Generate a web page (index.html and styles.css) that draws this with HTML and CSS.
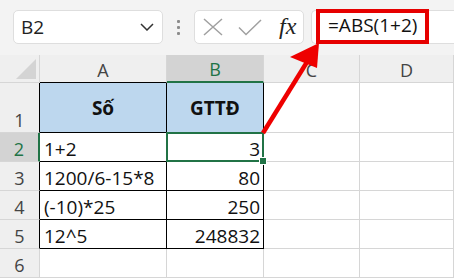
FILE: index.html
```html
<!DOCTYPE html>
<html>
<head>
<meta charset="utf-8">
<link rel="stylesheet" href="styles.css">
</head>
<body>
<div class="page">
  <div class="toolbar">
    <div class="namebox">
      <span class="ref">B2</span>
      <svg class="chev" width="14" height="8" viewBox="0 0 14 8"><path d="M1 1 L7 7 L13 1" fill="none" stroke="#333" stroke-width="1.5"/></svg>
    </div>
    <div class="dots"><i></i><i></i><i></i></div>
    <div class="btns">
      <svg width="20" height="18" viewBox="0 0 20 18"><path d="M1 1 L19 17 M19 1 L1 17" fill="none" stroke="#a0a0a0" stroke-width="1.5"/></svg>
      <svg width="24" height="17" viewBox="0 0 24 17"><path d="M1 8.5 L8 15.5 L23 1" fill="none" stroke="#a0a0a0" stroke-width="1.5"/></svg>
      <span class="fx">fx</span>
    </div>
    <div class="formula"><span class="hl">=ABS(1+2)</span></div>
  </div>
  <div class="sheet">
    <div class="corner"></div>
    <div class="ch">A</div>
    <div class="ch sel">B</div>
    <div class="ch">C</div>
    <div class="ch">D</div>

    <div class="rh tb">1</div>
    <div class="c a head">Số</div>
    <div class="c b head">GTTĐ</div>
    <div class="c"></div>
    <div class="c"></div>

    <div class="rh tb sel">2</div>
    <div class="c a">1+2</div>
    <div class="c b active">3</div>
    <div class="c"></div>
    <div class="c"></div>

    <div class="rh tb">3</div>
    <div class="c a">1200/6-15*8</div>
    <div class="c b">80</div>
    <div class="c"></div>
    <div class="c"></div>

    <div class="rh tb">4</div>
    <div class="c a">(-10)*25</div>
    <div class="c b">250</div>
    <div class="c"></div>
    <div class="c"></div>

    <div class="rh tb">5</div>
    <div class="c a">12^5</div>
    <div class="c b">248832</div>
    <div class="c"></div>
    <div class="c"></div>

    <div class="rh">6</div>
    <div class="c"></div>
    <div class="c"></div>
    <div class="c"></div>
    <div class="c"></div>
  </div>
  <svg class="arrow" width="454" height="278" viewBox="0 0 454 278">
    <line x1="263" y1="133" x2="307" y2="62" stroke="#ee0000" stroke-width="4.5"/>
    <polygon points="319,43 290,57 317,68" fill="#ee0000"/>
  </svg>
</div>
</body>
</html>
```

FILE: styles.css
```css
* { box-sizing: border-box; }
html, body { margin: 0; padding: 0; background: #fff; }
.page {
  position: relative;
  width: 454px;
  height: 278px;
  overflow: hidden;
  font-family: "Open Sans", "Noto Sans", sans-serif;
}
.toolbar {
  height: 55px;
  background: #f3f3f3;
  display: flex;
  align-items: flex-start;
  padding: 10px 0 0 13px;
}
.namebox {
  width: 150px;
  height: 34px;
  background: #fff;
  border: 1px solid #dedede;
  border-radius: 5px;
  display: flex;
  align-items: center;
  justify-content: space-between;
  padding: 0 8px 0 7px;
}
.ref { font-size: 19px; color: #222; line-height: 1; }
.chev { display: block; }
.dots {
  width: 31px;
  height: 34px;
  display: flex;
  flex-direction: column;
  align-items: center;
  justify-content: center;
  gap: 3px;
}
.dots i {
  display: block;
  width: 3px;
  height: 3px;
  background: #8c8c8c;
  border-radius: 1px;
}
.btns {
  width: 110px;
  height: 34px;
  background: #fff;
  border: 1px solid #dedede;
  border-radius: 5px;
  display: flex;
  align-items: center;
  padding-left: 8px;
}
.btns svg { display: block; }
.btns svg + svg { margin-left: 15px; }
.fx {
  margin-left: 17px;
  font-family: "Liberation Serif", "DejaVu Serif", serif;
  font-style: italic;
  font-size: 24px;
  line-height: 1;
  color: #222;
  margin-top: -2px;
}
.formula {
  margin-left: 7px;
  flex: 1;
  height: 34px;
  background: #fff;
  border: 1px solid #dedede;
  border-right: none;
  border-radius: 5px 0 0 5px;
  padding-left: 4px;
  display: flex;
  align-items: flex-start;
}
.hl {
  margin-top: -2px;
  height: 35px;
  width: 113px;
  border: 4px solid #e60000;
  padding-left: 8px;
  font-size: 19px;
  line-height: 25px;
  color: #111;
}
.sheet {
  display: grid;
  grid-template-columns: 40px 127px 97px 96px 1fr;
  grid-template-rows: 28px 50px repeat(6, 29px);
}
.sheet > div {
  border-right: 1px solid #d6d6d6;
  border-bottom: 1px solid #d6d6d6;
  display: flex;
  align-items: flex-end;
  line-height: 24px;
  white-space: nowrap;
}
.corner {
  background: #efefef;
  position: relative;
}
.corner::after {
  content: "";
  position: absolute;
  right: 3px;
  bottom: 3px;
  width: 0;
  height: 0;
  border-left: 20px solid transparent;
  border-bottom: 20px solid #d4d4d4;
}
.ch {
  background: #efefef;
  justify-content: center;
  font-size: 18px;
  color: #444;
  line-height: 24px;
}
.sheet > .ch:nth-child(2), .sheet > .ch:nth-child(3) { border-bottom-color: #000; }
.sheet > .ch.sel {
  background: #d3d3d3;
  color: #217346;
  border-bottom: 2px solid #217346;
}
.rh {
  background: #efefef;
  justify-content: center;
  font-size: 18px;
  color: #444;
}
.sheet > .rh.tb { border-right-color: #000; }
.sheet > .rh.sel {
  background: #d3d3d3;
  color: #217346;
  border-right: 2px solid #217346;
}
.c { font-size: 19px; color: #111; }
.sheet > .a { border-right-color: #000; border-bottom-color: #000; padding-left: 4px; }
.sheet > .b { border-right-color: #000; border-bottom-color: #000; justify-content: flex-end; padding-right: 3px; }
.sheet > .head {
  background: #bdd7ee;
  justify-content: center;
  align-items: center;
  font-weight: 700;
  padding: 0;
}
.active { position: relative; }
.active::before {
  content: "";
  position: absolute;
  left: -1px;
  top: -1px;
  right: -1px;
  bottom: -1px;
  border: 2px solid #217346;
}
.active::after {
  content: "";
  position: absolute;
  right: -4px;
  bottom: -4px;
  width: 6px;
  height: 6px;
  background: #217346;
  border: 1px solid #fff;
}
.arrow {
  position: absolute;
  left: 0;
  top: 0;
  pointer-events: none;
}
```
